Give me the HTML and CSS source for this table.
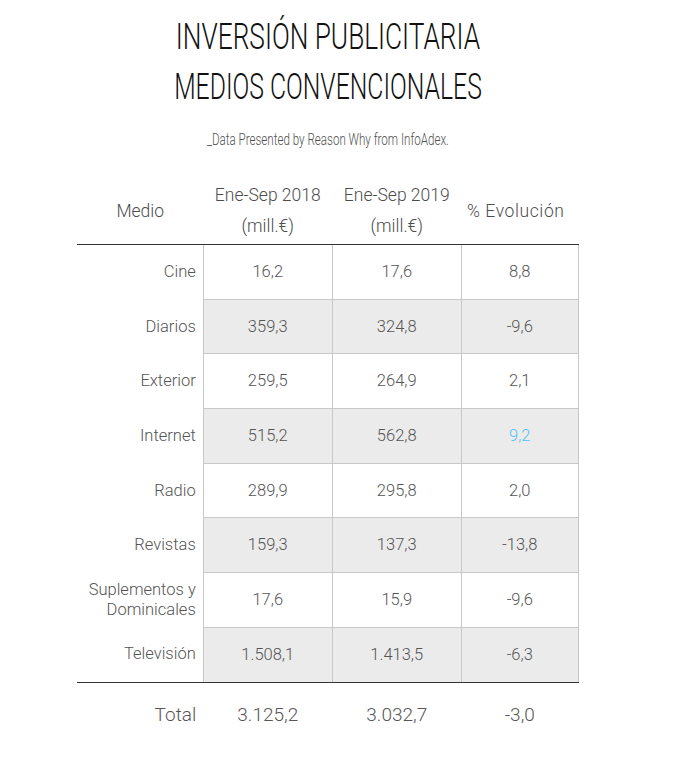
FILE: index.html
```html
<!DOCTYPE html>
<html lang="es">
<head>
<meta charset="utf-8">
<title>Inversión publicitaria medios convencionales</title>
<link rel="stylesheet" href="styles.css">
</head>
<body>
<main class="page">
  <h1 class="title">
    <span class="title-line title-line-1">INVERSIÓN PUBLICITARIA</span>
    <span class="title-line title-line-2">MEDIOS CONVENCIONALES</span>
  </h1>
  <p class="source"><span class="source-text">_Data Presented by Reason Why from InfoAdex.</span></p>
  <table class="data">
    <colgroup>
      <col class="c-medio">
      <col class="c-num">
      <col class="c-num">
      <col class="c-evo">
    </colgroup>
    <thead>
      <tr>
        <th>Medio</th>
        <th>Ene-Sep 2018<br>(mill.€)</th>
        <th>Ene-Sep 2019<br>(mill.€)</th>
        <th class="evo">% Evolución</th>
      </tr>
    </thead>
    <tbody>
      <tr><td class="label">Cine</td><td>16,2</td><td>17,6</td><td>8,8</td></tr>
      <tr class="alt"><td class="label">Diarios</td><td>359,3</td><td>324,8</td><td>-9,6</td></tr>
      <tr><td class="label">Exterior</td><td>259,5</td><td>264,9</td><td>2,1</td></tr>
      <tr class="alt"><td class="label">Internet</td><td>515,2</td><td>562,8</td><td class="highlight">9,2</td></tr>
      <tr><td class="label">Radio</td><td>289,9</td><td>295,8</td><td>2,0</td></tr>
      <tr class="alt"><td class="label">Revistas</td><td>159,3</td><td>137,3</td><td>-13,8</td></tr>
      <tr><td class="label two-line">Suplementos y<br>Dominicales</td><td>17,6</td><td>15,9</td><td>-9,6</td></tr>
      <tr class="alt last"><td class="label">Televisión</td><td>1.508,1</td><td>1.413,5</td><td>-6,3</td></tr>
    </tbody>
    <tfoot>
      <tr><td class="label">Total</td><td>3.125,2</td><td>3.032,7</td><td>-3,0</td></tr>
    </tfoot>
  </table>
</main>
</body>
</html>
```

FILE: styles.css
```css
html, body {
  margin: 0;
  padding: 0;
  background: #ffffff;
}

.page {
  width: 656px;
  font-family: Roboto, "Liberation Sans", sans-serif;
  font-weight: 300;
  color: #555555;
}

.title {
  margin: 11px 0 0;
  font-family: Roboto, "Liberation Sans", sans-serif;
  font-weight: 300;
  font-size: 37.5px;
  line-height: 50px;
  color: #111111;
  text-align: center;
}

.title-line {
  display: block;
  white-space: nowrap;
}

.title-line-1 {
  transform: scaleX(0.70);
}

.title-line-2 {
  transform: scaleX(0.66);
}

.source {
  margin: 19px 0 0;
  font-size: 16px;
  line-height: 20px;
  text-align: center;
  color: #505050;
}

.source-text {
  display: inline-block;
  transform: scaleX(0.725);
  white-space: nowrap;
}

.data {
  margin: 30px auto 0;
  width: 501px;
  table-layout: fixed;
  border-collapse: collapse;
  font-size: 16.5px;
}

.c-medio { width: 126px; }
.c-num { width: 129px; }
.c-evo { width: 117px; }

.data th {
  font-weight: 300;
  font-size: 17.5px;
  line-height: 31px;
  color: #4d4d4d;
  text-align: center;
  vertical-align: middle;
  padding: 0 0 2px;
  border-bottom: 1px solid #333333;
}

.data th.evo {
  letter-spacing: 0.6px;
  padding-right: 8px;
  white-space: nowrap;
}

.data tbody td {
  height: 53.7px;
  padding: 0;
  text-align: center;
  vertical-align: middle;
  line-height: 20px;
  border: 1px solid #c8c8c8;
}

.data tbody td.label {
  text-align: right;
  padding-right: 7px;
  border-top: none;
  border-left: none;
  border-bottom: none;
  background: #ffffff;
}

.data tbody tr.alt td {
  background: #ebebeb;
}

.data tbody tr.alt td.label {
  background: #ffffff;
}

.data tbody tr.last td {
  border-bottom: 1px solid #333333;
}

.data td.highlight {
  color: #4fc3f4;
}

.data tfoot td {
  height: 64px;
  padding: 0;
  font-size: 19px;
  text-align: center;
  vertical-align: middle;
}

.data tfoot td.label {
  text-align: right;
  padding-right: 7px;
}
```
